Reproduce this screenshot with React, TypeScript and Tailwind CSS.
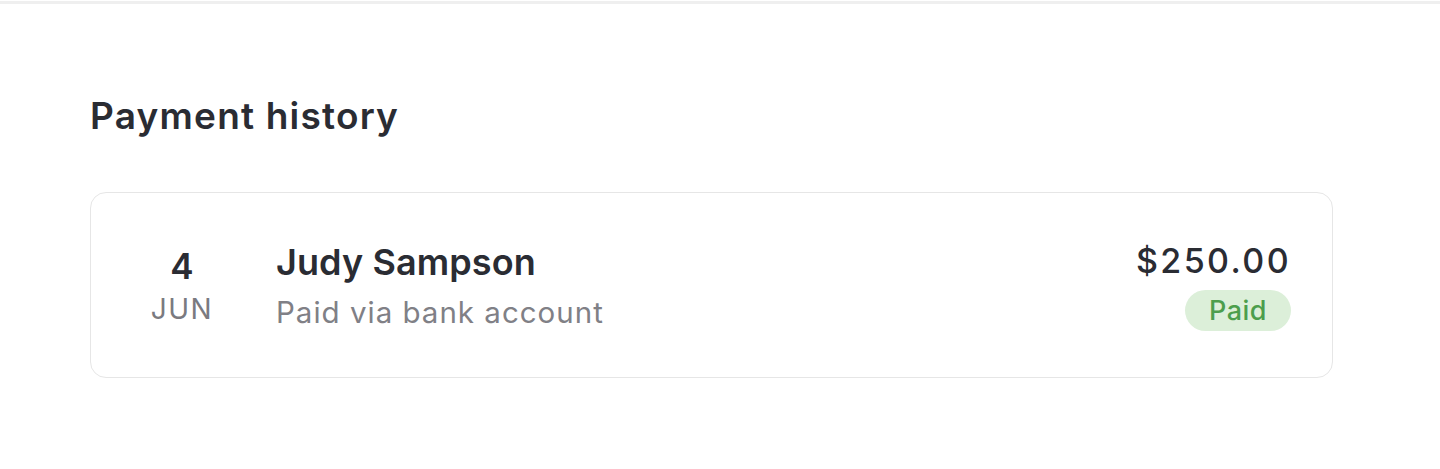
export default function App() {
  return (
    <div className="min-h-[469px] bg-white font-['Inter',sans-serif]">
      <div className="pt-px">
        <div className="h-[3px] bg-[#efefef]" />
      </div>

      <div className="pl-[90px] pr-[107px] pt-[86px]">
        <h2 className="text-[37px] font-semibold leading-[52px] tracking-[1.2px] text-[#2a2c33]">
          Payment history
        </h2>

        <div className="mt-[50px] flex h-[186px] items-center rounded-[16px] border border-[#e6e6e6] pl-[45px] pr-[41px]">
          <div className="flex w-[92px] flex-col items-center">
            <span className="text-[35px] font-semibold leading-[44px] text-[#2a2c33]">4</span>
            <span className="mt-[4px] text-[28px] leading-[34px] tracking-[1.5px] text-[#7a7a80]">JUN</span>
          </div>

          <div className="ml-[48px] flex flex-1 flex-col">
            <span className="text-[36px] font-semibold leading-[44px] tracking-[0.1px] text-[#2a2c33]">
              Judy Sampson
            </span>
            <span className="mt-[10px] text-[29.5px] leading-[36px] tracking-[1px] text-[#808086]">
              Paid via bank account
            </span>
          </div>

          <div className="flex flex-col items-end">
            <span className="text-[34px] font-medium leading-[44px] tracking-[2.4px] text-[#2a2c33]">$250.00</span>
            <span className="mt-[7px] rounded-full bg-[#dcefd9] px-[24px] text-[27px] font-medium leading-[41px] tracking-[0.5px] text-[#4c9e4c]">
              Paid
            </span>
          </div>
        </div>
      </div>
    </div>
  );
}
